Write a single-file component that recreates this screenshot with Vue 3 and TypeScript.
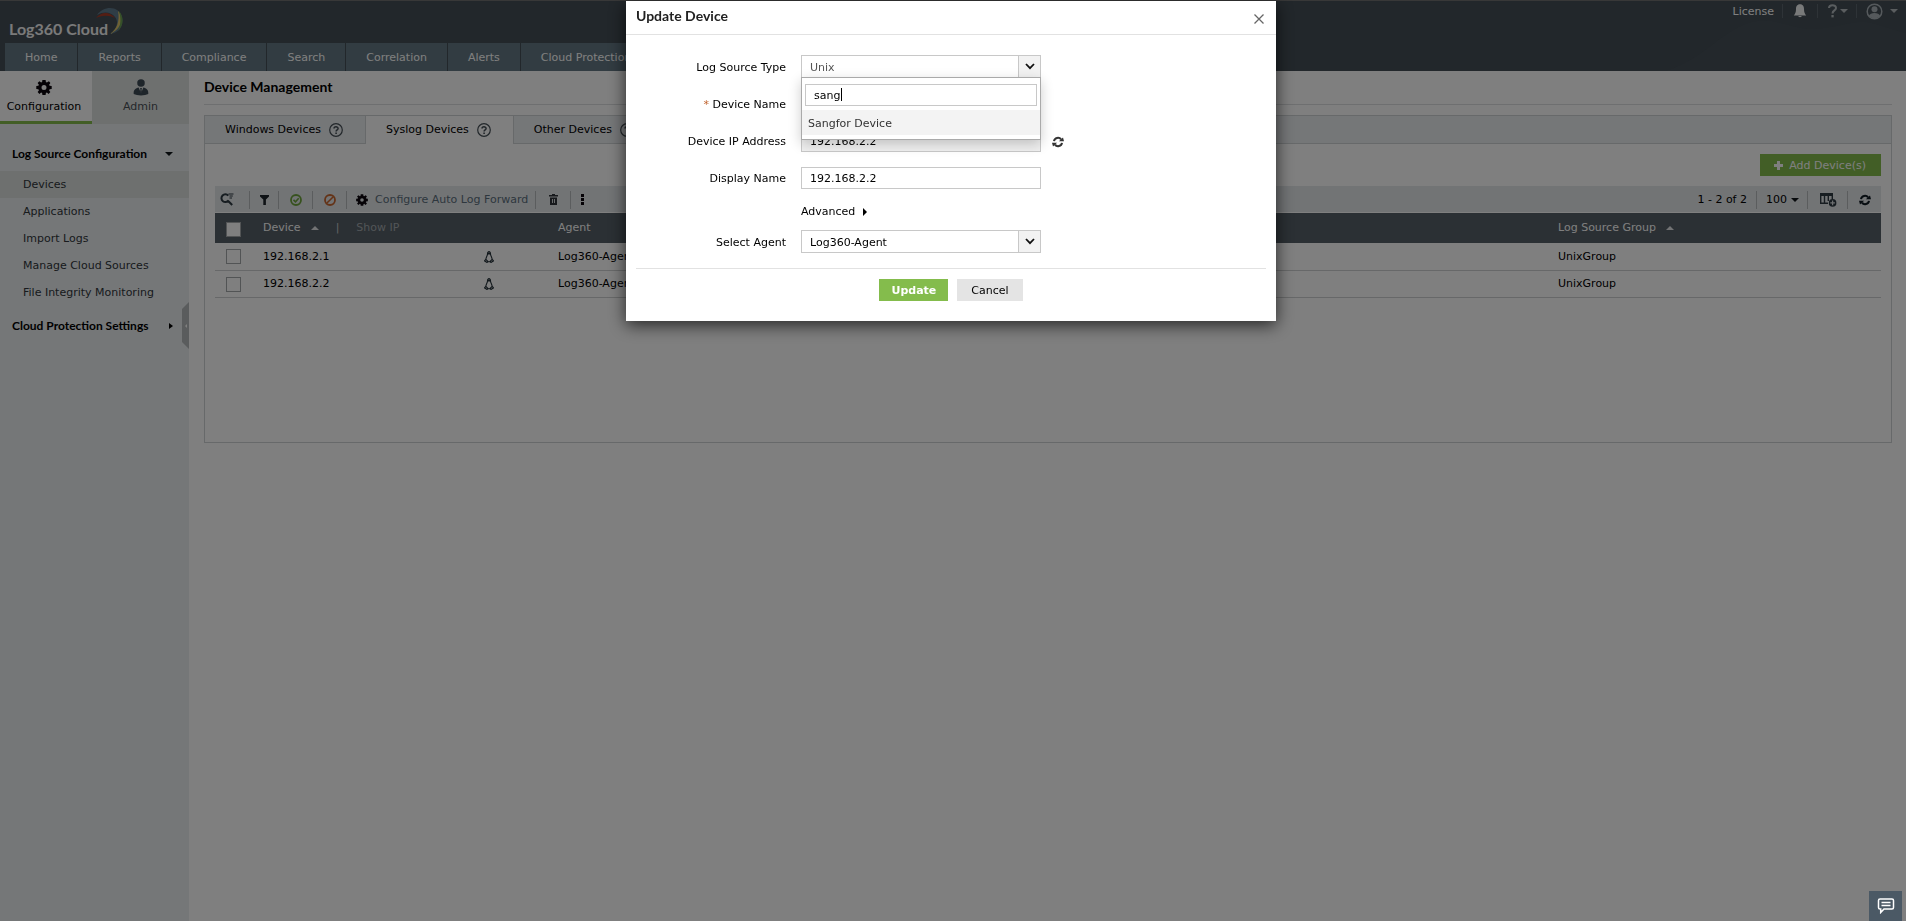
<script setup lang="ts">
import { ref } from 'vue'

interface Device {
  ip: string
  agent: string
  group: string
}

const navItems: string[] = ['Home', 'Reports', 'Compliance', 'Search', 'Correlation', 'Alerts', 'Cloud Protection']
const menuItems: string[] = ['Devices', 'Applications', 'Import Logs', 'Manage Cloud Sources', 'File Integrity Monitoring']
const deviceTabs: string[] = ['Windows Devices', 'Syslog Devices', 'Other Devices']
const devices: Device[] = [
  { ip: '192.168.2.1', agent: 'Log360-Agent', group: 'UnixGroup' },
  { ip: '192.168.2.2', agent: 'Log360-Agent', group: 'UnixGroup' },
]

const activeTab = ref('Syslog Devices')
const typeSearch = ref('sang')
const ipAddress = ref('192.168.2.2')
const deviceName = ref('192.168.2.2')
const displayName = ref('192.168.2.2')
</script>

<template>
  <div class="page">
    <header class="header">
      <svg class="wave" viewBox="0 0 240 54" preserveAspectRatio="none" aria-hidden="true">
        <path d="M0 54 C40 42 60 8 92 4 C115 2 130 14 150 12 C175 10 190 2 205 6 C220 10 230 14 240 16 V54 Z" fill="#475159" />
      </svg>
      <div class="brand-row">
        <div class="brand">
          <span class="brand-name">Log360 Cloud</span>
          <svg class="brand-arc" width="30" height="28" viewBox="0 0 30 28" aria-hidden="true">
            <path d="M2 8 C9 -2 24 -1 27 10 C29 19 24 26 15 27 C22 22 24 15 20 10 C16 5 9 4 2 8Z" fill="#5f7a8c" />
            <path d="M1 11 C7 4 15 5 20 11 C14 8 8 8 1 11Z" fill="#a83c28" />
            <path d="M23 4 C29 11 27 22 15 27 C22 22 25 14 23 4Z" fill="#dcc46a" />
            <path d="M24 4 C29 10 29 18 23 24 C26 18 26 11 24 4Z" fill="#6aa050" />
          </svg>
        </div>
        <div class="user-tools">
          <a href="#" class="license">License</a>
          <button type="button" class="tool bell" aria-label="Notifications">
            <svg width="14" height="14" viewBox="0 0 14 14"><path d="M7 0.3 C3.8 0.3 3 2.8 3 5 C3 8.5 2.2 9.6 0.8 11.4 H13.2 C11.800 9.6 11 8.500 11 5 C11 2.800 10.200 0.300 7 0.300Z M5.200 12 H8.800 C8.600 13.500 5.400 13.500 5.200 12Z" fill="#f2f4f5" /></svg>
          </button>
          <button type="button" class="tool help" aria-label="Help">
            <svg width="9" height="14" viewBox="0 0 9 14"><path d="M1 4 C1 0.300 8 0.200 8 3.900 C8 6.500 4.500 6.300 4.500 9.500" fill="none" stroke="#b4bbbf" stroke-width="2" /><rect x="3.400" y="11" width="2.300" height="2.400" fill="#b4bbbf" /></svg>
            <i class="caret light"></i>
          </button>
          <button type="button" class="tool user" aria-label="Account">
            <svg width="17" height="17" viewBox="0 0 17 17"><circle cx="8.500" cy="8.500" r="7.300" fill="none" stroke="#aab3b8" stroke-width="1.500" /><circle cx="8.500" cy="6.200" r="3" fill="#aab3b8" /><path d="M2.800 12.900 C4 9 13 9 14.200 12.900 C11 16 6 16 2.800 12.900Z" fill="#aab3b8" /></svg>
            <i class="caret light"></i>
          </button>
        </div>
      </div>
      <nav class="nav">
        <a v-for="item in navItems" :key="item" href="#" class="nav-item">{{ item }}</a>
      </nav>
    </header>

    <div class="body">
      <aside class="sidebar">
        <div class="side-tabs">
          <a href="#" class="side-tab config">
            <svg width="16" height="16" viewBox="0 0 16 16"><path fill-rule="evenodd" d="M6.400 0.500 H9.600 L9.900 2.500 L10.900 3 L12.900 1.700 L14.400 3.400 L13.100 5.200 L13.600 6.300 L15.700 6.600 V9.400 L13.600 9.700 L13.100 10.900 L14.400 12.600 L12.600 14.400 L10.900 13.100 L9.900 13.600 L9.600 15.500 H6.400 L6.100 13.600 L5.100 13.100 L3.400 14.400 L1.600 12.600 L2.900 10.900 L2.400 9.700 L0.300 9.400 V6.600 L2.400 6.300 L2.900 5.200 L1.600 3.400 L3.400 1.700 L5.100 3 L6.100 2.500Z M8 5.500 A2.500 2.500 0 1 0 8 10.500 A2.500 2.500 0 1 0 8 5.500Z" fill="#0a050c" /></svg>
            <span>Configuration</span>
          </a>
          <a href="#" class="side-tab admin">
            <svg width="16" height="18" viewBox="0 0 16 18"><circle cx="8" cy="4.300" r="4" fill="#3c4a55" /><path d="M0.300 16 C-0.300 11.500 2.500 9.600 5.500 9 L8 15 L10.500 9 C13.500 9.600 16.300 11.500 15.700 16 C12 18 4 18 0.300 16Z" fill="#3c4a55" /><path d="M7 9.500 H9 L8.600 11 L9 14 L8 15.500 L7 14 L7.400 11Z" fill="#3c4a55" /></svg>
            <span>Admin</span>
          </a>
        </div>
        <button type="button" class="menu-head first">Log Source Configuration<i class="caret"></i></button>
        <ul class="menu">
          <li v-for="item in menuItems" :key="item">
            <a href="#" :class="{ current: item === 'Devices' }">{{ item }}</a>
          </li>
        </ul>
        <button type="button" class="menu-head">Cloud Protection Settings<i class="caret right"></i></button>
        <button type="button" class="collapse" aria-label="Collapse sidebar"><i></i></button>
      </aside>

      <main class="main">
        <h1 class="title">Device Management</h1>
        <section class="panel">
          <div class="tabs" role="tablist">
            <button v-for="tab in deviceTabs" :key="tab" type="button" role="tab" :aria-selected="tab === activeTab" class="tab" :class="{ active: tab === activeTab }" @click="activeTab = tab">
              {{ tab }}
              <svg width="14" height="14" viewBox="0 0 14 14" aria-hidden="true"><circle cx="7" cy="7" r="6.300" fill="none" stroke="#454f56" stroke-width="1.200" /><path d="M5 5.600 C5 3.300 9.100 3.300 9.100 5.500 C9.100 7 7.100 6.900 7.100 8.600" fill="none" stroke="#454f56" stroke-width="1.500" /><rect x="6.300" y="9.500" width="1.600" height="1.500" fill="#454f56" /></svg>
            </button>
          </div>
          <div class="panel-body">
            <button type="button" class="add">
              <svg width="9" height="9" viewBox="0 0 9 9" aria-hidden="true"><path d="M3 0 H6 V3 H9 V6 H6 V9 H3 V6 H0 V3 H3Z" fill="#fff" /></svg>
              Add Device(s)
            </button>
            <div class="toolbar">
              <button type="button" class="tb search" aria-label="Search">
                <svg width="14" height="13" viewBox="0 0 14 13"><path d="M8.300 2.600 A3.900 3.900 0 1 0 8.600 7.300 M8.200 8 L12.200 12" fill="none" stroke="#2e3a42" stroke-width="2" /><path d="M8.500 1 H13.500 M9.500 3 H12.800 M9.500 5 H12" stroke="#2e3a42" stroke-width="1" /></svg>
              </button>
              <button type="button" class="tb filter" aria-label="Filter">
                <svg width="9" height="10" viewBox="0 0 9 10"><path d="M0 0 H9 V1.500 L5.900 4.500 V10 H3.300 V4.500 L0 1.500Z" fill="#1c242a" /></svg>
              </button>
              <button type="button" class="tb" aria-label="Enable">
                <svg width="12" height="12" viewBox="0 0 12 12"><circle cx="6" cy="6" r="5" fill="none" stroke="#6fa53c" stroke-width="1.800" /><path d="M3.500 5.900 L5.500 7.800 L8.700 4.300" fill="none" stroke="#6fa53c" stroke-width="1.600" /></svg>
              </button>
              <button type="button" class="tb" aria-label="Disable">
                <svg width="12" height="12" viewBox="0 0 12 12"><circle cx="6" cy="6" r="5" fill="none" stroke="#c8672f" stroke-width="1.800" /><path d="M2.700 9.300 L9.300 2.700" stroke="#c8672f" stroke-width="1.600" /></svg>
              </button>
              <button type="button" class="tb forward">
                <svg width="12" height="12" viewBox="0 0 16 16"><path fill-rule="evenodd" d="M6.300 0.300 H9.700 L10 2.600 L10.900 3 L12.900 1.500 L14.600 3.200 L13.100 5.200 L13.500 6.100 L15.800 6.400 V9.600 L13.500 9.900 L13.100 10.900 L14.600 12.700 L12.700 14.600 L10.900 13.100 L10 13.500 L9.700 15.700 H6.300 L6 13.500 L5.100 13.100 L3.300 14.600 L1.400 12.700 L2.900 10.900 L2.500 9.900 L0.200 9.600 V6.400 L2.500 6.100 L2.900 5.200 L1.400 3.200 L3.300 1.500 L5.100 3 L6 2.600Z M8 5.600 A2.400 2.400 0 1 0 8 10.400 A2.400 2.400 0 1 0 8 5.600Z" fill="#0a050c" /></svg>
                Configure Auto Log Forward
              </button>
              <button type="button" class="tb" aria-label="Delete">
                <svg width="9" height="11" viewBox="0 0 9 11"><path d="M3 0 H6 V1 H9 V2.500 H0 V1 H3Z M1 3.500 H8 V11 H1Z" fill="#2e3338" /><path d="M3.500 5 V9 M5.500 5 V9" stroke="#d5d9db" stroke-width="1" /></svg>
              </button>
              <button type="button" class="tb dots" aria-label="More actions">
                <svg width="3" height="11" viewBox="0 0 3 11"><path d="M0 0H3V3H0Z M0 4H3V7H0Z M0 8H3V11H0Z" fill="#0a050c" /></svg>
              </button>
              <span class="range">1 - 2 of 2</span>
              <button type="button" class="tb size">100<i class="caret"></i></button>
              <button type="button" class="tb columns" aria-label="Choose columns">
                <svg width="17" height="14" viewBox="0 0 17 14"><path d="M0 1.500 H13" fill="none" stroke="#2e3a42" stroke-width="3" /><path d="M0.700 2 V10.500 M4.500 2 V10.500 M8.300 2 V8 M12.300 2 V6 M0 10.200 H8" fill="none" stroke="#2e3a42" stroke-width="1.400" /><circle cx="12.600" cy="9.900" r="3.800" fill="#2e3a42" /><path d="M10.300 9.900 H14.900 M12.600 7.600 V12.200" stroke="#dde1e4" stroke-width="1.200" /></svg>
              </button>
              <button type="button" class="tb refresh" aria-label="Refresh">
                <svg width="12" height="12" viewBox="0 0 12 12"><path d="M2 5.200 C2.600 1.700 7 0.700 9.100 3.300 M10 6.800 C9.400 10.300 5 11.300 2.900 8.700" fill="none" stroke="#0f1a22" stroke-width="2" /><path d="M6.900 5.200 H12 L11 1.500Z M5.100 6.800 H0 L1 10.500Z" fill="#0f1a22" /></svg>
              </button>
            </div>
            <table class="grid">
              <colgroup><col class="c-check" /><col class="c-device" /><col class="c-os" /><col /><col class="c-group" /></colgroup>
              <thead>
                <tr>
                  <th><input type="checkbox" aria-label="Select all devices" /></th>
                  <th>Device<i class="caret up"></i><span class="bar">|</span><a href="#" class="show-ip">Show IP</a></th>
                  <th></th>
                  <th>Agent</th>
                  <th>Log Source Group<i class="caret up"></i></th>
                </tr>
              </thead>
              <tbody>
                <tr v-for="device in devices" :key="device.ip">
                  <td><input type="checkbox" :aria-label="`Select ${device.ip}`" /></td>
                  <td>{{ device.ip }}</td>
                  <td>
                    <svg width="10" height="12" viewBox="0 0 10 12" aria-hidden="true"><path d="M3.500 3 C3.300 -0.200 6.700 -0.200 6.500 3 C6.500 5 8.300 6.500 8.200 9 M1.800 9 C1.700 6.500 3.500 5 3.500 3 M0.500 9.800 L1.800 8.300 L4 10.500 L3 11.500Z M9.500 9.800 L8.200 8.300 L6 10.500 L7 11.500Z M4 10.800 H6" fill="none" stroke="#26333b" stroke-width="1.100" /><path d="M3.800 1.500 H6.200 V3.500 H3.800Z" fill="#26333b" /></svg>
                  </td>
                  <td>{{ device.agent }}</td>
                  <td>{{ device.group }}</td>
                </tr>
              </tbody>
            </table>
          </div>
        </section>
      </main>
    </div>

    <div class="overlay">
      <form class="modal" role="dialog" aria-labelledby="modal-title" @submit.prevent>
        <div class="modal-head">
          <h2 id="modal-title">Update Device</h2>
          <button type="button" class="close" aria-label="Close">
            <svg width="10" height="10" viewBox="0 0 10 10"><path d="M0.500 0.500 L9.500 9.500 M9.500 0.500 L0.500 9.500" stroke="#666" stroke-width="1.300" /></svg>
          </button>
        </div>
        <div class="fields">
          <label for="source-type">Log Source Type</label>
          <div class="select open">
            <select id="source-type"><option>Unix</option></select>
            <span class="arrow"><svg width="10" height="7" viewBox="0 0 10 7"><path d="M1 1 L5 5.200 L9 1" fill="none" stroke="#111" stroke-width="1.800" /></svg></span>
            <div class="dropdown">
              <input v-model="typeSearch" type="text" aria-label="Search log source types" />
              <i class="cursor"></i>
              <button type="button" class="option">Sangfor Device</button>
            </div>
          </div>
          <label for="device-name"><b class="required">*</b> Device Name</label>
          <input id="device-name" v-model="deviceName" type="text" />
          <label for="device-ip">Device IP Address</label>
          <div class="with-icon">
            <input id="device-ip" v-model="ipAddress" class="readonly" type="text" readonly />
            <button type="button" class="resolve" aria-label="Resolve address">
              <svg width="12" height="12" viewBox="0 0 12 12"><path d="M2 5.200 C2.600 1.700 7 0.700 9.100 3.300 M10 6.800 C9.400 10.300 5 11.300 2.900 8.700" fill="none" stroke="#333" stroke-width="2" /><path d="M6.900 5.200 H12 L11 1.500Z M5.100 6.800 H0 L1 10.500Z" fill="#333" /></svg>
            </button>
          </div>
          <label for="display-name">Display Name</label>
          <input id="display-name" v-model="displayName" type="text" />
          <button type="button" class="advanced">Advanced<i class="caret right"></i></button>
          <label for="agent">Select Agent</label>
          <div class="select">
            <select id="agent"><option>Log360-Agent</option></select>
            <span class="arrow"><svg width="10" height="7" viewBox="0 0 10 7"><path d="M1 1 L5 5.200 L9 1" fill="none" stroke="#111" stroke-width="1.800" /></svg></span>
          </div>
        </div>
        <div class="actions">
          <button type="submit" class="primary">Update</button>
          <button type="button" class="secondary">Cancel</button>
        </div>
      </form>
    </div>

    <button type="button" class="chat" aria-label="Chat">
      <svg width="18" height="16" viewBox="0 0 18 16"><path d="M3 1 H15 Q16.500 1 16.500 2.500 V9.500 Q16.500 11 15 11 H7 L3.700 14.500 V11 H3 Q1.500 11 1.500 9.500 V2.500 Q1.500 1 3 1Z M4.500 4.500 H13.500 M4.500 7.500 H13.500" fill="none" stroke="#fff" stroke-width="1.500" /></svg>
    </button>
  </div>
</template>

<style>
html,
body {
  margin: 0;
  background: #fff;
}
</style>

<style scoped>
.page {
  min-height: 100vh;
  display: flex;
  flex-direction: column;
  font-family: Verdana, "DejaVu Sans", sans-serif;
  font-size: 11px;
  line-height: 14px;
  color: #000;
  background: #fff;
}
.page *,
.page {
  box-sizing: border-box;
}
a {
  color: inherit;
  text-decoration: none;
}
button,
input,
select {
  font: inherit;
  color: inherit;
  border-radius: 0;
  margin: 0;
}
button {
  background: none;
  border: 0;
  padding: 0;
}
svg {
  display: block;
  flex: none;
}
.caret {
  flex: none;
  display: inline-block;
  border: 4px solid transparent;
  border-top-color: #11161a;
  border-bottom-width: 0;
}
.caret.light {
  border-top-color: #b4bbbf;
}
.caret.right {
  border: 4px solid transparent;
  border-left-color: #000;
  border-right-width: 0;
}
.caret.up {
  border: 4px solid transparent;
  border-bottom-color: #e4e6e8;
  border-top-width: 0;
}

/* Header */
.header {
  position: relative;
  border-top: 1px solid #707070;
  background: #444e56;
  color: #fff;
}
.wave {
  position: absolute;
  right: 0;
  bottom: 0;
  width: 240px;
  height: 54px;
}
.brand-row {
  position: relative;
  display: flex;
  justify-content: space-between;
  height: 42px;
}
.brand {
  display: flex;
  align-items: flex-start;
  padding: 6px 0 0 9px;
}
.brand-name {
  font: 700 16px/20px Lato, sans-serif;
  margin-top: 12px;
  color: #f4f4f4;
}
.brand-arc {
  margin-left: -13px;
}
.user-tools {
  display: flex;
  align-items: center;
  height: 20px;
  padding-right: 8px;
}
.license {
  padding: 2px 8px 0 0;
}
.tool {
  display: flex;
  align-items: center;
  height: 14px;
  padding: 0 10px;
  border-left: 1px solid #5c666e;
}
.help {
  gap: 3px;
  padding: 0 8px 0 10px;
}
.user {
  gap: 7px;
  padding: 0 0 0 9px;
}
.nav {
  position: relative;
  display: flex;
  gap: 1px;
  padding-left: 5px;
  height: 28px;
}
.nav-item {
  display: flex;
  align-items: center;
  padding: 2px 20px 0;
  background: #647884;
}

/* Sidebar */
.body {
  flex: 1;
  display: flex;
}
.sidebar {
  position: relative;
  flex: none;
  width: 189px;
  background: #ebeef1;
}
.side-tabs {
  display: flex;
  height: 53px;
  background: #dde0df;
}
.side-tab {
  flex: 1;
  display: flex;
  flex-direction: column;
  align-items: center;
  gap: 4px;
  padding-top: 8px;
}
.side-tab svg {
  height: 17px;
}
.side-tab.config {
  flex: none;
  width: 92px;
  padding-right: 4px;
  background: #fff;
  border-bottom: 3px solid #84bc4c;
}
.side-tab.admin {
  color: #4a5056;
}
.menu-head {
  display: flex;
  align-items: center;
  justify-content: space-between;
  width: 100%;
  height: 34px;
  padding: 0 16px 0 12px;
  font: 700 12px/20px Lato, sans-serif;
}
.menu-head.first {
  margin-top: 13px;
}
.menu-head .caret {
  border-width: 4px 4px 0;
}
.menu-head .caret.right {
  border-width: 3px 0 3px 4px;
}
.menu {
  list-style: none;
  margin: 0 0 3px;
  padding: 0;
}
.menu a {
  display: block;
  padding: 7px 0 6px 23px;
  color: #30363a;
}
.menu a.current {
  background: #dde0df;
}
.collapse {
  position: absolute;
  right: 0;
  top: 231px;
  width: 7px;
  height: 47px;
  background: #b4b8ba;
  clip-path: polygon(100% 0, 0 15%, 0 85%, 100% 100%);
}
.collapse i {
  display: block;
  margin-left: 3px;
  width: 0;
  border: 2px solid transparent;
  border-left-width: 0;
  border-right-color: #fff;
}

/* Main panel */
.main {
  flex: 1;
  min-width: 0;
  padding: 0 14px 0 15px;
}
.title {
  margin: 0 0 10px;
  height: 34px;
  border-bottom: 1px solid #dcdee0;
  font: 700 14px/32px Lato, sans-serif;
}
.panel {
  border: 1px solid #cfd3d5;
  min-height: 328px;
}
.tabs {
  display: flex;
  height: 28px;
  background: #ebeef1;
  box-shadow: inset 0 -1px #cfd3d5;
}
.tab {
  display: flex;
  align-items: center;
  gap: 8px;
  padding: 0 22px 0 20px;
}
.tab.active {
  background: #fff;
  border: solid #cfd3d5;
  border-width: 0 1px;
}
.panel-body {
  padding: 10px;
}
.add {
  display: flex;
  align-items: center;
  gap: 6px;
  height: 22px;
  margin: 0 0 10px auto;
  padding: 1px 15px 0 14px;
  background: #84bc4c;
  color: #fff;
}
.toolbar {
  display: flex;
  align-items: center;
  height: 27px;
  padding-top: 1px;
  background: #e4e8eb;
  border-bottom: 1px solid #fff;
}
.tb {
  display: flex;
  align-items: center;
  height: 18px;
  padding: 0 10px 0 11px;
  border-left: 1px solid #b6babd;
}
.tb.search {
  border: 0;
  padding: 0 15px 0 5px;
}
.tb.filter {
  padding: 0 9px 0 10px;
}
.tb.forward {
  gap: 7px;
  padding: 0 7px 0 9px;
  color: #5c6f7c;
}
.forward + .tb {
  padding: 0 12px 0 13px;
}
.tb.dots {
  padding: 0 10px;
}
.range {
  margin-left: auto;
  padding-right: 9px;
}
.tb.size {
  gap: 4px;
  padding: 0 8px 0 9px;
}
.tb.columns {
  padding: 0 10px 0 12px;
}
.tb.refresh {
  padding: 0 10px 0 11px;
}
.grid {
  width: 100%;
  table-layout: fixed;
  border-collapse: collapse;
}
.c-check {
  width: 36px;
}
.c-device {
  width: 225px;
}
.c-os {
  width: 70px;
}
.c-group {
  width: 335px;
}
.grid th,
.grid td {
  height: 27px;
  padding: 1px 12px 0;
  text-align: left;
  font-weight: 400;
  white-space: nowrap;
  border-bottom: 1px solid #cfd1d2;
}
.grid td svg {
  margin-left: -4px;
}
.grid th {
  height: 30px;
  padding-top: 0;
  background: #566068;
  color: #fff;
  border: 0;
}
.grid th:first-child,
.grid td:first-child {
  padding-left: 11px;
  padding-right: 0;
}
.grid input {
  appearance: none;
  display: block;
  width: 15px;
  height: 15px;
  background: #fff;
  border: 1px solid #a4a8aa;
}
.grid th input {
  margin-top: 3px;
}
.grid .caret {
  margin: 0 0 1px 10px;
}
.bar {
  margin: 0 17px;
  color: #c4c8ca;
}
.show-ip {
  color: #a5abaf;
}

/* Dialog */
.overlay {
  position: fixed;
  inset: 0;
  display: flex;
  justify-content: center;
  align-items: flex-start;
  padding: 1px 4px 0 0;
  background: rgba(0, 0, 0, 0.5);
}
.modal {
  width: 650px;
  background: #fff;
  box-shadow: 0 4px 16px rgba(0, 0, 0, 0.7);
}
.modal-head {
  display: flex;
  justify-content: space-between;
  height: 34px;
  padding: 0 12px 0 10px;
  border-bottom: 1px solid #e2e2e2;
}
.modal-head h2 {
  margin: 0;
  font: 700 14px/30px Lato, sans-serif;
  color: #222;
}
.close {
  padding-top: 2px;
}
.fields {
  display: grid;
  grid-template-columns: 150px 240px;
  gap: 15px;
  align-items: center;
  margin: 0 10px;
  padding: 20px 0 15px;
  border-bottom: 1px solid #e2e2e2;
}
.fields label {
  padding-top: 2px;
  text-align: right;
}
.required {
  color: #c0622c;
  font-weight: 400;
}
.fields input {
  display: block;
  width: 100%;
  height: 22px;
  padding: 0 8px;
  border: 1px solid #c8c8c8;
  background: #fff;
  outline: 0;
}
.fields .readonly {
  background: #f0f0f0;
}
.with-icon {
  position: relative;
}
.resolve {
  position: absolute;
  left: 100%;
  top: 6px;
  margin-left: 11px;
}
.select {
  position: relative;
  display: flex;
  height: 23px;
  border: 1px solid #c8c8c8;
}
.select select {
  appearance: none;
  flex: 1;
  border: 0;
  padding: 2px 8px 0;
  background: #fff;
  outline: 0;
}
.select.open select {
  color: #555;
}
.arrow {
  display: flex;
  align-items: center;
  justify-content: center;
  width: 22px;
  background: #f2f2f2;
  border-left: 1px solid #c8c8c8;
}
.dropdown {
  position: absolute;
  z-index: 2;
  top: 21px;
  left: -1px;
  right: -1px;
  padding: 6px 0 4px;
  background: #fff;
  border: 1px solid #aaa;
  box-shadow: 0 4px 12px rgba(0, 0, 0, 0.2);
}
.dropdown input {
  width: calc(100% - 6px);
  margin: 0 3px 4px;
}
.cursor {
  position: absolute;
  left: 39px;
  top: 10px;
  width: 1px;
  height: 13px;
  background: #000;
}
.option {
  display: block;
  width: 100%;
  height: 25px;
  padding: 2px 6px 0;
  text-align: left;
  background: #f3f3f3;
  color: #333;
}
.advanced {
  grid-column: 2;
  display: flex;
  align-items: center;
  gap: 8px;
  height: 16px;
  margin-bottom: -5px;
}
.actions {
  display: flex;
  justify-content: center;
  gap: 9px;
  padding: 10px 0 20px;
}
.actions button {
  height: 22px;
  padding: 1px 12px 0;
}
.actions .primary {
  background: #84bc4c;
  color: #fff;
  font-weight: 700;
}
.actions .secondary {
  padding: 1px 14px 0;
  background: #e4e4e4;
}
.chat {
  position: fixed;
  right: 4px;
  bottom: 0;
  width: 33px;
  height: 30px;
  display: flex;
  align-items: center;
  justify-content: center;
  background: #4b5965;
}
</style>
